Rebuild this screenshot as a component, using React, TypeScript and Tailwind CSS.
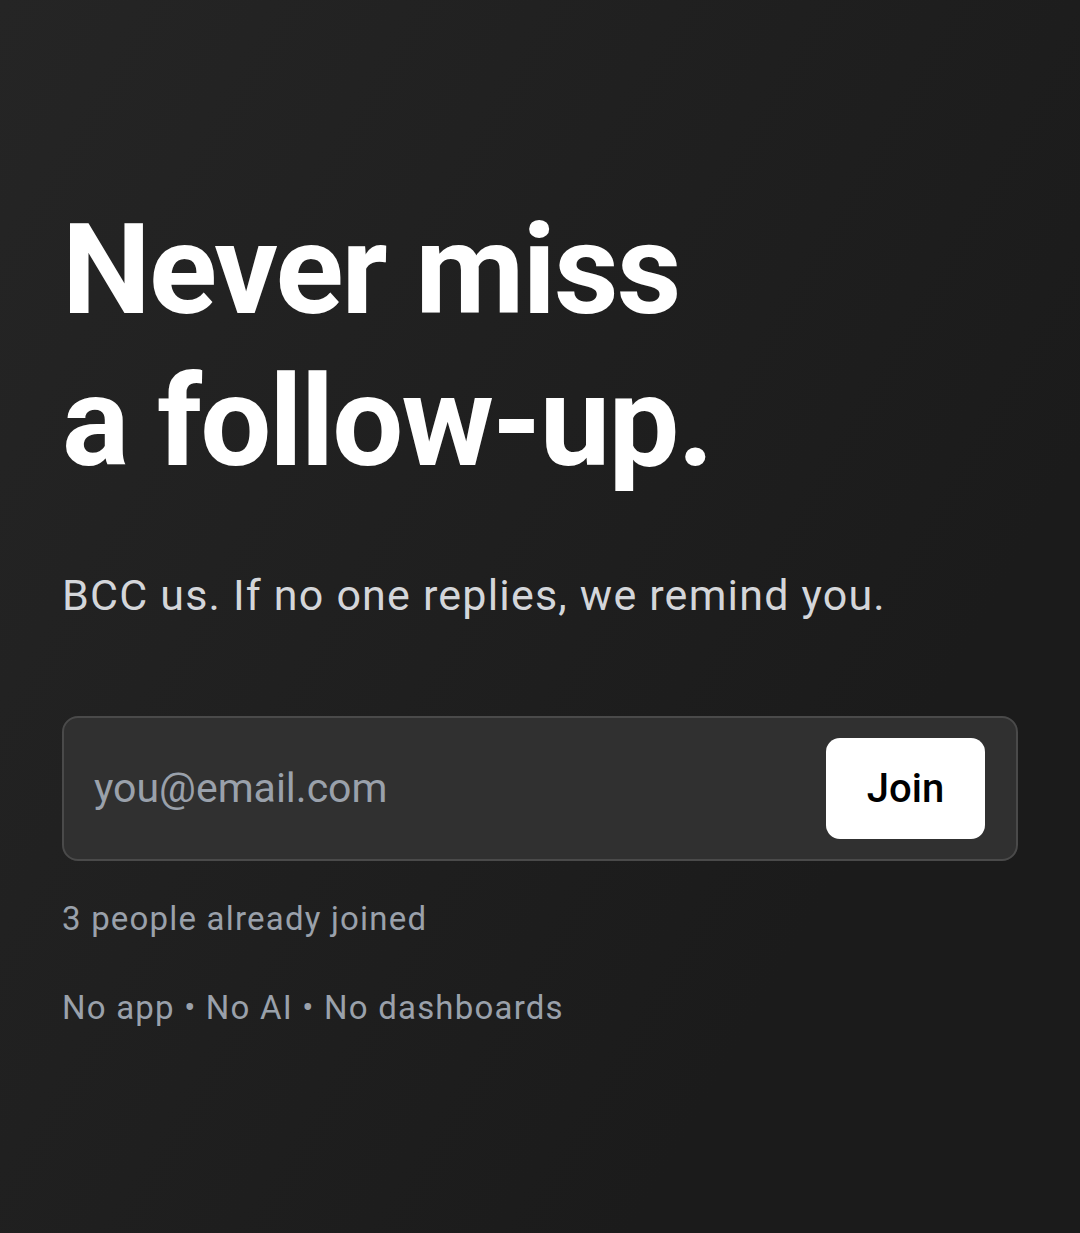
export default function App() {
  return (
    <div
      className="min-h-screen w-full bg-[linear-gradient(120deg,#252525_0%,#1f1f1f_45%,#1b1b1b_75%)] font-['Roboto',sans-serif]"
    >
      <div className="flex flex-col px-[62px] pt-[194px]">
        <h1 className="text-[126px] font-bold leading-[152px] tracking-[-1.9px] text-white">
          Never miss
          <br />
          a follow-up.
        </h1>
        <p className="mt-[66px] text-[43px] leading-[63px] tracking-[1.2px] text-[#d4d6da]">
          BCC us. If no one replies, we remind you.
        </p>
        <div className="mt-[89px] flex h-[145px] w-[956px] items-center rounded-[16px] border-2 border-[#4a4a4a] bg-[#303030] pl-[30px] pr-[31px]">
          <input
            type="email"
            placeholder="you@email.com"
            className="min-w-0 flex-1 bg-transparent text-[41px] text-white outline-none placeholder:text-[#9aa1ab]"
          />
          <button className="flex h-[101px] w-[159px] items-center justify-center rounded-[14px] bg-white text-[40px] font-medium text-black">
            Join
          </button>
        </div>
        <p className="mt-[34px] text-[33px] leading-[47px] tracking-[1.2px] text-[#9aa1ab]">
          3 people already joined
        </p>
        <p className="mt-[42px] text-[33px] leading-[47px] tracking-[1.2px] text-[#9aa1ab]">
          No app • No AI • No dashboards
        </p>
      </div>
    </div>
  );
}
